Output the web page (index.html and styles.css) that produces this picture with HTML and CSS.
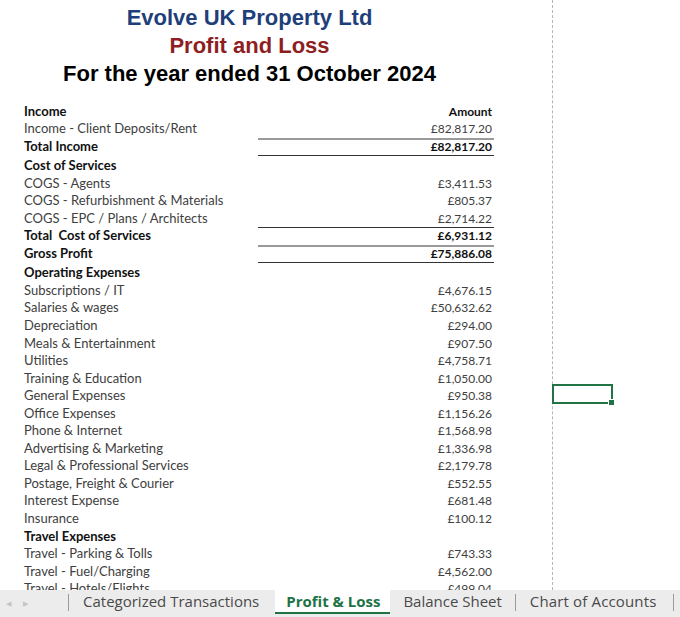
FILE: index.html
```html
<!DOCTYPE html>
<html>
<head>
<meta charset="utf-8">
<link rel="stylesheet" href="styles.css">
</head>
<body>
<div class="app">
  <div class="sheet">
    <div class="report">
      <div class="titles">
        <div class="t1">Evolve UK Property Ltd</div>
        <div class="t2">Profit and Loss</div>
        <div class="t3">For the year ended 31 October 2024</div>
      </div>
      <div class="table">
        <div class="row b"><span class="lbl">Income</span><span class="amt">Amount</span></div>
        <div class="row"><span class="lbl">Income - Client Deposits/Rent</span><span class="amt line-gray">£82,817.20</span></div>
        <div class="row b"><span class="lbl">Total Income</span><span class="amt line">£82,817.20</span></div>
        <div class="row b tall"><span class="lbl">Cost of Services</span><span class="amt"></span></div>
        <div class="row"><span class="lbl">COGS - Agents</span><span class="amt">£3,411.53</span></div>
        <div class="row"><span class="lbl">COGS - Refurbishment &amp; Materials</span><span class="amt">£805.37</span></div>
        <div class="row"><span class="lbl">COGS - EPC / Plans / Architects</span><span class="amt line">£2,714.22</span></div>
        <div class="row b"><span class="lbl">Total&nbsp; Cost of Services</span><span class="amt line-gray">£6,931.12</span></div>
        <div class="row b"><span class="lbl">Gross Profit</span><span class="amt line">£75,886.08</span></div>
        <div class="row b tall"><span class="lbl">Operating Expenses</span><span class="amt"></span></div>
        <div class="row"><span class="lbl">Subscriptions / IT</span><span class="amt">£4,676.15</span></div>
        <div class="row"><span class="lbl">Salaries &amp; wages</span><span class="amt">£50,632.62</span></div>
        <div class="row"><span class="lbl">Depreciation</span><span class="amt">£294.00</span></div>
        <div class="row"><span class="lbl">Meals &amp; Entertainment</span><span class="amt">£907.50</span></div>
        <div class="row"><span class="lbl">Utilities</span><span class="amt">£4,758.71</span></div>
        <div class="row"><span class="lbl">Training &amp; Education</span><span class="amt">£1,050.00</span></div>
        <div class="row"><span class="lbl">General Expenses</span><span class="amt">£950.38</span></div>
        <div class="row"><span class="lbl">Office Expenses</span><span class="amt">£1,156.26</span></div>
        <div class="row"><span class="lbl">Phone &amp; Internet</span><span class="amt">£1,568.98</span></div>
        <div class="row"><span class="lbl">Advertising &amp; Marketing</span><span class="amt">£1,336.98</span></div>
        <div class="row"><span class="lbl">Legal &amp; Professional Services</span><span class="amt">£2,179.78</span></div>
        <div class="row"><span class="lbl">Postage, Freight &amp; Courier</span><span class="amt">£552.55</span></div>
        <div class="row"><span class="lbl">Interest Expense</span><span class="amt">£681.48</span></div>
        <div class="row"><span class="lbl">Insurance</span><span class="amt">£100.12</span></div>
        <div class="row b"><span class="lbl">Travel Expenses</span><span class="amt"></span></div>
        <div class="row"><span class="lbl">Travel - Parking &amp; Tolls</span><span class="amt">£743.33</span></div>
        <div class="row"><span class="lbl">Travel - Fuel/Charging</span><span class="amt">£4,562.00</span></div>
        <div class="row"><span class="lbl">Travel - Hotels/Flights</span><span class="amt">£499.04</span></div>
      </div>
    </div>
    <div class="pagebreak"></div>
    <div class="selcell"><span class="handle"></span></div>
  </div>
  <div class="tabbar">
    <div class="nav"><span class="arr">&#9664;</span><span class="arr">&#9654;</span></div>
    <span class="sep"></span>
    <span class="tab first">Categorized Transactions</span>
    <span class="tab active">Profit &amp; Loss</span>
    <span class="tab">Balance Sheet</span>
    <span class="sep"></span>
    <span class="tab last">Chart of Accounts</span>
    <span class="sep"></span>
  </div>
</div>
</body>
</html>
```
FILE: styles.css
```css
* { box-sizing: border-box; }
html, body { margin: 0; padding: 0; background: #fff; }
.app {
  width: 680px;
  height: 617px;
  display: flex;
  flex-direction: column;
  overflow: hidden;
}
.sheet {
  position: relative;
  height: 590px;
  overflow: hidden;
  background: #fff;
}
.report {
  width: 494px;
  padding-top: 4px;
}
.titles {
  font-family: "Liberation Sans", Arial, sans-serif;
  font-weight: bold;
  font-size: 22px;
  text-align: center;
  width: 499px;
}
.titles div { height: 28px; line-height: 28px; }
.t1 { color: #1f3f7a; }
.t2 { color: #8e1e22; }
.t3 { color: #000; }
.table {
  margin-top: 14.5px;
  padding-left: 24px;
  font-family: Lato, "Open Sans", sans-serif;
  font-size: 13px;
  color: #404040;
}
.row {
  display: grid;
  grid-template-columns: 234px 236px;
  height: 17.55px;
  line-height: 17.5px;
}
.row.tall { height: 19.5px; padding-top: 2px; }
.row.b { font-weight: bold; color: #111; }
.lbl { white-space: nowrap; }
.amt {
  text-align: right;
  padding-right: 2px;
  white-space: nowrap;
  font-size: 12px;
  line-height: 17.5px;
}
.amt.line { border-bottom: 1px solid #333; }
.amt.line-gray { border-bottom: 2px solid #9a9a9a; }
.pagebreak {
  position: absolute;
  left: 552px;
  top: 0;
  bottom: 0;
  border-left: 1px dashed #b5b5b5;
}
.selcell {
  position: absolute;
  left: 552px;
  top: 384px;
  width: 61px;
  height: 20px;
  border: 2px solid #217346;
}
.handle {
  position: absolute;
  right: -4px;
  bottom: -4px;
  width: 5px;
  height: 5px;
  background: #217346;
  border: 1px solid #fff;
  box-sizing: content-box;
}
.tabbar {
  height: 27px;
  background: #ececec;
  display: flex;
  align-items: flex-start;
  font-family: "Open Sans", "Noto Sans", sans-serif;
  font-size: 15px;
  color: #4a4a4a;
}
.nav {
  display: flex;
  gap: 12px;
  width: 68px;
  padding-left: 6px;
  padding-top: 3px;
  height: 24px;
  align-items: center;
  font-size: 7px;
  color: #c4c4c4;
}
.sep {
  width: 1px;
  height: 17px;
  background: #9a9a9a;
  margin-top: 4px;
}
.tab {
  height: 24px;
  line-height: 22px;
  padding: 0 13px;
  white-space: nowrap;
}
.tab.first { padding: 0 16px 0 14px; }
.tab.last { padding: 0 16px 0 14px; letter-spacing: 0.15px; }
.tab.active {
  background: #fff;
  color: #217346;
  font-weight: bold;
  border-bottom: 2px solid #217346;
  padding: 0 10px 0 11px;
}
```
